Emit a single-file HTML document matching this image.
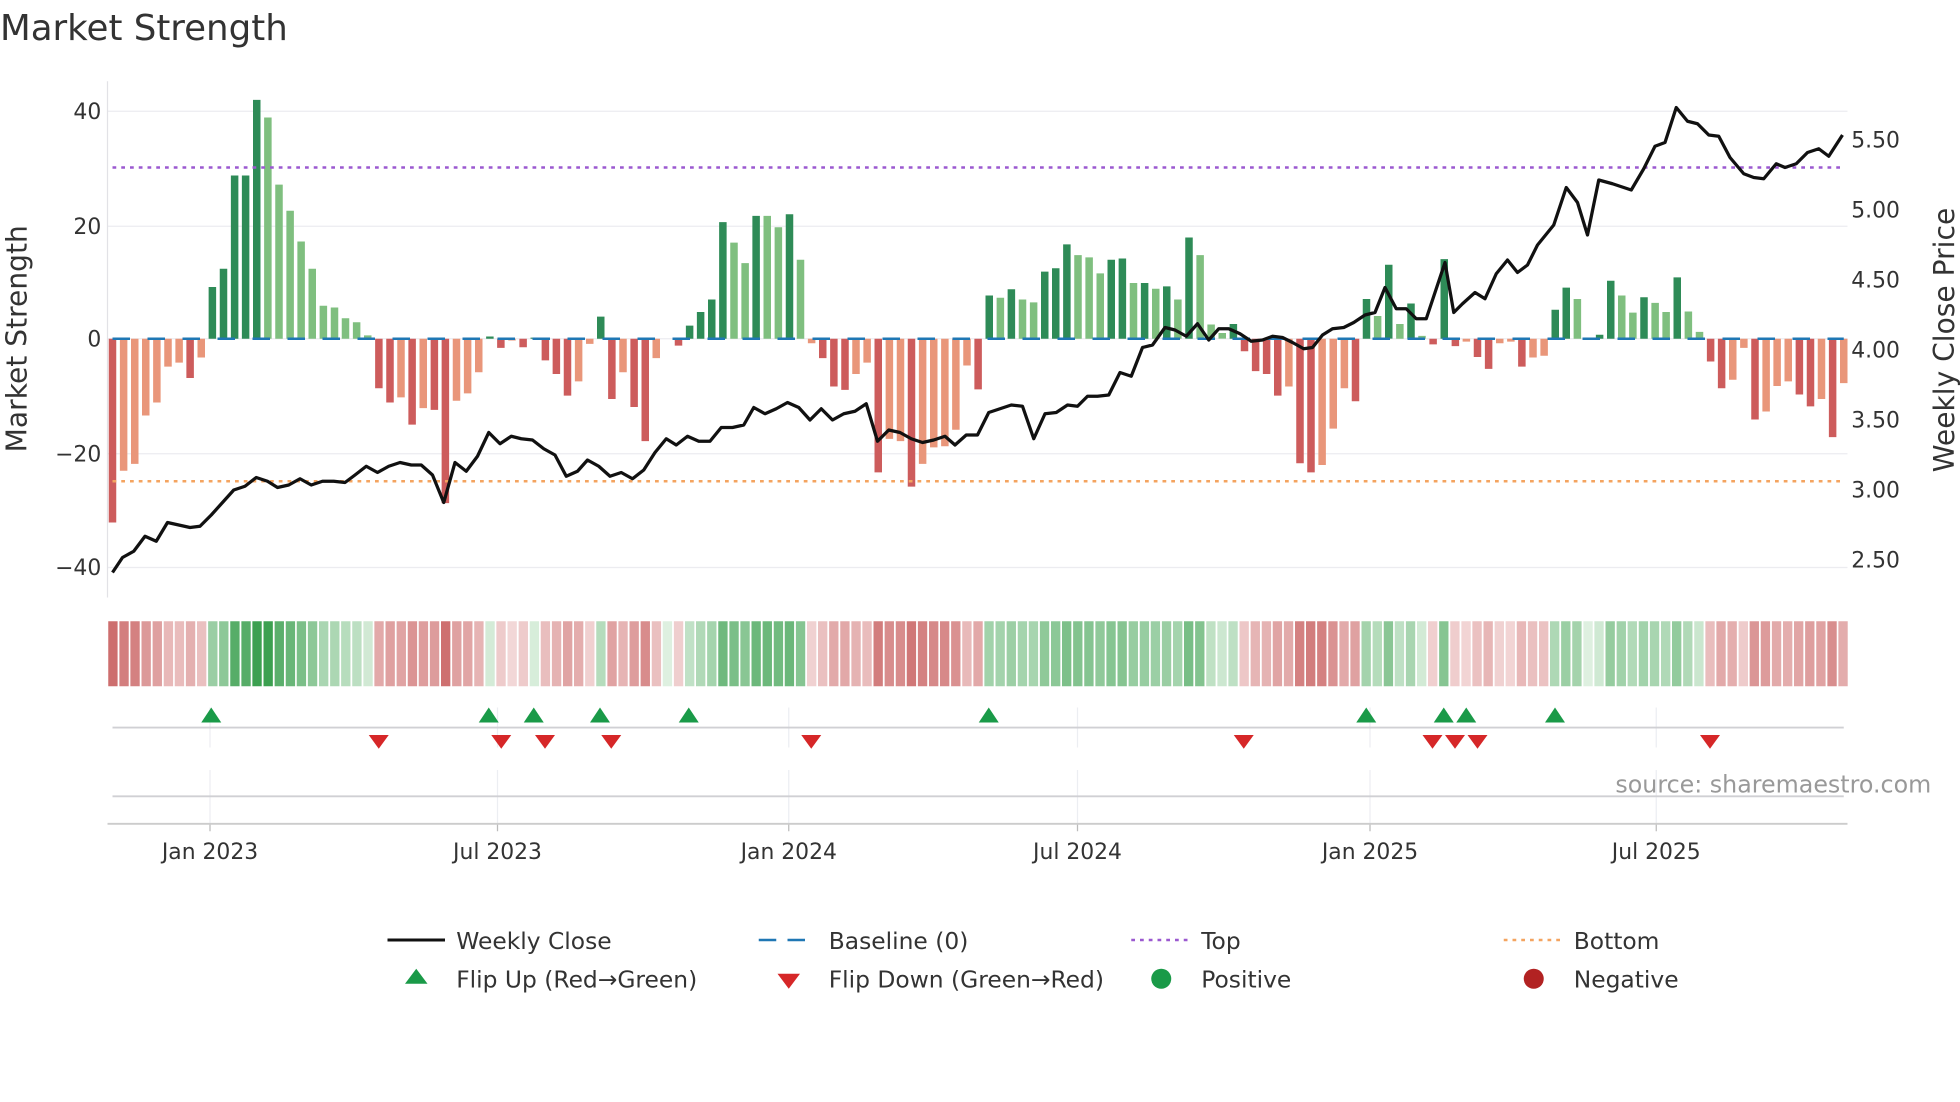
<!DOCTYPE html>
<html><head><meta charset="utf-8"><style>
html,body{margin:0;padding:0;background:#fff;}
svg{display:block;font-family:"DejaVu Sans","Liberation Sans",sans-serif;}
</style></head><body>
<svg id="c" width="1960" height="1102" viewBox="0 0 1568 881.6" xmlns="http://www.w3.org/2000/svg">
<text x="0" y="32" font-size="28.5" fill="#333">Market Strength</text>
<g id="g"></g>
</svg>
<script>
const V=[[-32.3,1],[-23.2,0],[-22,0],[-13.5,0],[-11.2,0],[-4.9,0],[-4.2,0],[-6.9,1],[-3.3,0],[9.1,1],[12.3,1],[28.7,1],[28.7,1],[42,1],[38.9,0],[27.1,0],[22.5,0],[17.1,0],[12.3,0],[5.8,0],[5.5,0],[3.6,0],[2.9,0],[0.6,0],[-8.7,1],[-11.2,1],[-10.3,0],[-15.1,1],[-12.2,0],[-12.5,1],[-28.9,1],[-10.9,0],[-9.6,0],[-5.9,0],[0.4,1],[-1.6,1],[-0.3,0],[-1.5,1],[0.2,1],[-3.8,1],[-6.2,1],[-10,1],[-7.5,0],[-0.9,0],[3.9,1],[-10.6,1],[-5.9,0],[-12,1],[-18,1],[-3.4,0],[0,0],[-1.2,1],[2.3,1],[4.7,1],[6.9,1],[20.5,1],[16.9,0],[13.3,0],[21.6,1],[21.6,0],[19.6,0],[21.9,1],[13.9,0],[-0.8,0],[-3.4,1],[-8.4,1],[-9,1],[-6.2,0],[-4.2,0],[-23.5,1],[-17.6,0],[-18,0],[-26,1],[-22,0],[-19.1,0],[-18.9,0],[-16,0],[-4.7,0],[-8.9,1],[7.6,1],
[7.2,0],[8.7,1],[6.9,0],[6.4,0],[11.8,1],[12.4,1],[16.6,1],[14.7,0],[14.3,0],[11.5,0],[13.9,1],[14.1,1],[9.8,0],[9.8,1],[8.8,0],[9.2,1],[6.9,0],[17.8,1],[14.7,0],[2.5,0],[1,0],[2.6,1],[-2.2,1],[-5.7,1],[-6.2,1],[-10,1],[-8.4,0],[-21.9,1],[-23.5,1],[-22.2,0],[-15.8,0],[-8.7,0],[-11,1],[7,1],[4,0],[13,1],[2.6,0],[6.2,1],[0.5,0],[-1,1],[14,1],[-1.3,1],[-0.5,0],[-3.2,1],[-5.3,1],[-0.8,0],[-0.5,0],[-4.9,1],[-3.3,0],[-3,0],[5.1,1],[9,1],[7,0],[0,0],[0.7,1],[10.2,1],[7.6,0],[4.6,0],[7.3,1],[6.3,0],[4.7,0],[10.8,1],[4.8,0],[1.2,0],[-4,1],[-8.7,1],[-7.2,0],[-1.6,0],[-14.2,1],[-12.8,0],[-8.3,0],[-7.5,0],[-9.8,1],[-11.9,1],[-10.6,0],[-17.3,1],[-7.8,0]];
const P=[[90,458],[98,446],[107,441],[116,429],[125,433],[134,418],[143,420],[152,422],[160,421],[169,412],[178,402],[187,392],[196,389],[205,382],[214,385],[222,390],[231,388],[240,383],[249,388],[258,385],[267,385],[276,386],[284,380],[293,373],[302,378],[311,373],[320,370],[329,372],[337,372],[346,380],[355,402],[364,370],[373,377],[382,365],[391,346],[400,355],[409,349],[417,351],[426,352],[435,359],[444,364],[453,381],[462,377],[470,368],[479,373],[488,381],[497,378],[506,383],[515,376],[524,362],[533,351],[541,356],[550,349],[559,353],[568,353],[577,342],[586,342],[595,340],[603,326],[612,331],[621,327],[630,322],[639,326],[648,336],[657,327],[666,336],[675,331],[684,329],[693,323],[702,353],[711,344],[720,346],[729,351],[738,354],[747,352],[756,349],[764,356],[773,348],[782,348],[791,330],[800,327],[809,324],[818,325],[827,351],[836,331],[845,330],[854,324],[862,325],[870,317],[878,317],[887,316],[896,298],[905,301],[914,278],[922,276],[932,262],[940,264],[949,269],[958,259],[967,272],[975,263],[983,263],[992,267],[1001,273],[1010,272],[1018,269],[1026,270],[1034,274],[1043,279],[1050,278],[1058,268],[1066,263],[1075,262],[1083,258],[1092,252],[1100,250],[1108,230],[1117,247],[1125,247],[1133,255],[1141,255],[1149,231],[1156,210],[1163,250],[1170,243],[1180,234],[1188,239],[1197,219],[1206,208],[1214,218],[1222,212],[1230,196],[1243,180],[1253,150],[1262,162],[1270,188],[1279,144],[1290,147],[1305,152],[1315,135],[1324,117],[1332,114],[1341,86],[1350,97],[1358,99],[1367,108],[1375,109],[1384,126],[1395,139],[1403,142],[1411,143],[1421,131],[1428,134],[1437,131],[1446,122],[1455,119],[1463,125],[1474,108]];
let s='';
const Y0=271,K=4.55,N=V.length,step=1385/(N-1);
[[40,89],[20,181],[0,271],[-20,363],[-40,454]].forEach(([v,y])=>{s+=`<line x1="86" x2="1478" y1="${y}" y2="${y}" stroke="#ececf0" stroke-width="1"/>`;s+=`<text x="81" y="${y+6}" font-size="17.5" fill="#333" text-anchor="end">${v<0?'\u2212'+(-v):v}</text>`;});
[['5.50',112],['5.00',168],['4.50',224],['4.00',280],['3.50',336],['3.00',392],['2.50',448]].forEach(([t,y])=>{s+=`<text x="1481" y="${y+6}" font-size="17.5" fill="#333">${t}</text>`;});
s+=`<line x1="86" x2="86" y1="65" y2="478" stroke="#e2e2e6"/>`;
s+=`<text transform="translate(21,271) rotate(-90)" font-size="22.5" fill="#333" text-anchor="middle">Market Strength</text>`;
s+=`<text transform="translate(1563,272) rotate(-90)" font-size="22.5" fill="#333" text-anchor="middle">Weekly Close Price</text>`;
V.forEach(([v,d],i)=>{const x=90+i*step-3;const h=Math.abs(v)*K;const y=v>=0?Y0-h:Y0;
const c=v>=0?(d?'#2e8b57':'#7fbf7f'):(d?'#cd5c5c':'#e9967a');
if(h>0.3)s+=`<rect x="${x.toFixed(1)}" y="${y.toFixed(1)}" width="6" height="${h.toFixed(1)}" fill="${c}"/>`;});
s+=`<line x1="90" x2="1475" y1="271" y2="271" stroke="#1f77b4" stroke-width="2" stroke-dasharray="14,14"/>`;
s+=`<line x1="90" x2="1475" y1="134" y2="134" stroke="#9b59d0" stroke-width="2" stroke-dasharray="3,4"/>`;
s+=`<line x1="90" x2="1475" y1="385" y2="385" stroke="#f4a460" stroke-width="2" stroke-dasharray="3,4"/>`;
s+=`<polyline fill="none" stroke="#111" stroke-width="2.6" stroke-linejoin="round" points="${P.map(p=>p.join(',')).join(' ')}"/>`;
const cw=1393/N;
function mix(a,b,t){return 'rgb('+a.map((x,k)=>Math.round(x+(b[k]-x)*t)).join(',')+')';}
V.forEach(([v],i)=>{const x=86+i*cw;let t=Math.min(1,Math.pow(Math.abs(v)/42,0.6)*1.05);
const c=v>=0?mix([222,240,224],[60,160,80],t):mix([245,222,222],[205,110,110],Math.min(1,Math.pow(Math.abs(v)/30,0.6)));
s+=`<rect x="${(x+0.6).toFixed(1)}" y="497" width="${(cw-1.4).toFixed(2)}" height="52" fill="${c}"/>`;});
const D=[[168,'Jan 2023'],[398,'Jul 2023'],[631,'Jan 2024'],[862,'Jul 2024'],[1096,'Jan 2025'],[1325,'Jul 2025']];
D.forEach(([x,t])=>{s+=`<line x1="${x}" x2="${x}" y1="566" y2="598" stroke="#eceef2"/><line x1="${x}" x2="${x}" y1="616" y2="659" stroke="#eceef2"/><line x1="${x}" x2="${x}" y1="659" y2="665" stroke="#bbb"/><text x="${x}" y="687" font-size="17.5" fill="#333" text-anchor="middle">${t}</text>`;});
s+=`<line x1="90" x2="1475" y1="582" y2="582" stroke="#d0d0d4" stroke-width="1.5"/>`;
s+=`<line x1="90" x2="1475" y1="637" y2="637" stroke="#d0d0d4" stroke-width="1.5"/>`;
s+=`<line x1="86" x2="1478" y1="659" y2="659" stroke="#ccc" stroke-width="1.5"/>`;
[169,391,427,480,551,791,1093,1155,1173,1244].forEach(x=>{s+=`<polygon points="${x-8},578 ${x+8},578 ${x},566" fill="#1a9a48"/>`;});
[303,401,436,489,649,995,1146,1164,1182,1368].forEach(x=>{s+=`<polygon points="${x-8},588 ${x+8},588 ${x},599" fill="#d62728"/>`;});
s+=`<text x="1545" y="634" font-size="19" fill="#999" text-anchor="end">source: sharemaestro.com</text>`;
const L='font-size="18.7" fill="#333"';
s+=`<line x1="310" x2="356" y1="752" y2="752" stroke="#111" stroke-width="2.4"/><text x="365" y="759" ${L}>Weekly Close</text>`;
s+=`<line x1="607" x2="652" y1="752" y2="752" stroke="#1f77b4" stroke-width="2" stroke-dasharray="14,9"/><text x="663" y="759" ${L}>Baseline (0)</text>`;
s+=`<line x1="905" x2="950" y1="752" y2="752" stroke="#9b59d0" stroke-width="2" stroke-dasharray="3,4"/><text x="961" y="759" ${L}>Top</text>`;
s+=`<line x1="1203" x2="1248" y1="752" y2="752" stroke="#f4a460" stroke-width="2" stroke-dasharray="3,4"/><text x="1259" y="759" ${L}>Bottom</text>`;
s+=`<polygon points="324,787 342,787 333,775" fill="#1a9a48"/><text x="365" y="790" ${L}>Flip Up (Red→Green)</text>`;
s+=`<polygon points="622,779 640,779 631,791" fill="#d62728"/><text x="663" y="790" ${L}>Flip Down (Green→Red)</text>`;
s+=`<circle cx="929" cy="783" r="8" fill="#1a9a48"/><text x="961" y="790" ${L}>Positive</text>`;
s+=`<circle cx="1227" cy="783" r="8" fill="#b22222"/><text x="1259" y="790" ${L}>Negative</text>`;
document.getElementById('g').innerHTML=s;
</script>
</body></html>
